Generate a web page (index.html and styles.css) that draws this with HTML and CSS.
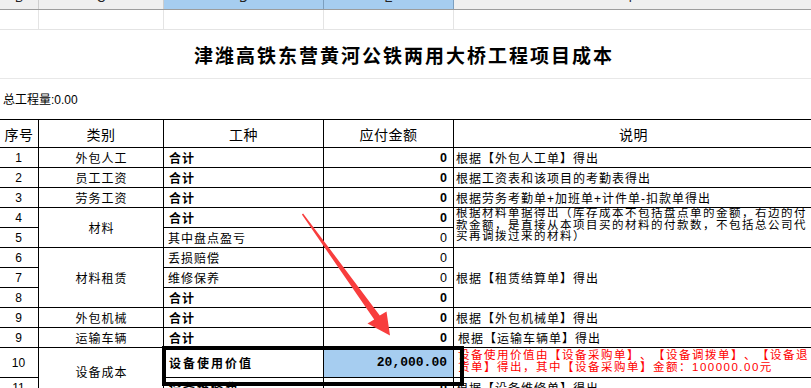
FILE: index.html
```html
<!DOCTYPE html>
<html lang="zh-CN">
<head>
<meta charset="utf-8">
<title>津潍高铁东营黄河公铁两用大桥工程项目成本</title>
<link rel="stylesheet" href="styles.css">
</head>
<body>
<div class="sheet">
  <div class="cols colhead">
    <div class="ch">B</div>
    <div class="ch">C</div>
    <div class="ch on">D</div>
    <div class="ch on">E</div>
    <div class="ch last">F</div>
  </div>
  <div class="cols blank">
    <div class="g"></div><div class="g"></div><div class="g"></div><div class="g"></div><div class="g last"></div>
  </div>
  <h1 class="title">津潍高铁东营黄河公铁两用大桥工程项目成本</h1>
  <div class="qty">总工程量:0.00</div>

  <div class="tbl">
    <div class="c h">序号</div>
    <div class="c h">类别</div>
    <div class="c h">工种</div>
    <div class="c h">应付金额</div>
    <div class="c h f">说明</div>

    <div class="c n">1</div>
    <div class="c k">外包人工</div>
    <div class="c l b">合计</div>
    <div class="c r b">0</div>
    <div class="c f">根据【外包人工单】得出</div>

    <div class="c n">2</div>
    <div class="c k">员工工资</div>
    <div class="c l b">合计</div>
    <div class="c r b">0</div>
    <div class="c f">根据工资表和该项目的考勤表得出</div>

    <div class="c n">3</div>
    <div class="c k">劳务工资</div>
    <div class="c l b">合计</div>
    <div class="c r b">0</div>
    <div class="c f">根据劳务考勤单+加班单+计件单-扣款单得出</div>

    <div class="c n">4</div>
    <div class="c k span2">材料</div>
    <div class="c l b">合计</div>
    <div class="c r b">0</div>
    <div class="c f span2 desc">根据材料单据得出（库存成本不包括盘点单的金额，右边的付<br>款金额，是直接从本项目买的材料的付款数，不包括总公司代<br>买再调拨过来的材料）</div>

    <div class="c n">5</div>
    <div class="c l">其中盘点盈亏</div>
    <div class="c r">0</div>

    <div class="c n">6</div>
    <div class="c k span3">材料租赁</div>
    <div class="c l">丢损赔偿</div>
    <div class="c r">0</div>
    <div class="c f span3">根据【租赁结算单】得出</div>

    <div class="c n">7</div>
    <div class="c l">维修保养</div>
    <div class="c r">0</div>

    <div class="c n">8</div>
    <div class="c l b">合计</div>
    <div class="c r b">0</div>

    <div class="c n">9</div>
    <div class="c k">外包机械</div>
    <div class="c l b">合计</div>
    <div class="c r b">0</div>
    <div class="c f">根据【外包机械单】得出</div>

    <div class="c n">9</div>
    <div class="c k">运输车辆</div>
    <div class="c l b">合计</div>
    <div class="c r b">0</div>
    <div class="c f indent">根据【运输车辆单】得出</div>

    <div class="c n">10</div>
    <div class="c k span2 low">设备成本</div>
    <div class="c l b wide selcell">设备使用价值</div>
    <div class="c r b mono picked">20,000.00</div>
    <div class="c f desc red">设备使用价值由【设备采购单】、【设备调拨单】、【设备退<br>货单】得出，其中【设备采购单】金额：100000.00元</div>

    <div class="c n">11</div>
    <div class="c l b wide">设备维修费</div>
    <div class="c r b">0</div>
    <div class="c f">根据【设备维修单】得出</div>
  </div>

  <svg class="arrow" width="811" height="388" viewBox="0 0 811 388" aria-hidden="true">
    <polygon points="303.1,213.4 379.8,315.5 386.5,311.5 390,335.5 367.5,323.5 374.2,319.5 301.9,214.6" fill="#f83d3d"/>
  </svg>
</div>
</body>
</html>
```

FILE: styles.css
```css
* {
  box-sizing: border-box;
}

html,
body {
  margin: 0;
  padding: 0;
}

body {
  width: 811px;
  height: 388px;
  overflow: hidden;
  background: #ffffff;
  color: #000000;
  font-family: "Liberation Sans", "Noto Sans CJK SC", sans-serif;
  text-spacing-trim: space-all;
}

.sheet {
  position: relative;
  width: 811px;
  height: 388px;
  overflow: hidden;
}

.cols {
  display: grid;
  grid-template-columns: 39px 125px 160px 130px 357px;
}

/* spreadsheet column header strip (mostly scrolled off) */
.colhead {
  margin-top: -11px;
  height: 21px;
  background: #efefef;
  border-bottom: 1px solid #9c9c9c;
}

.colhead .ch {
  border-right: 1px solid #cdcdcd;
  font-size: 12px;
  line-height: 19px;
  text-align: center;
  color: #222222;
}

.colhead .ch.on {
  background: #a6cdf0;
  border-right-color: #7c9fbf;
}

.colhead .ch.last {
  border-right: none;
}

.blank {
  height: 20px;
  border-bottom: 1px solid #e4e4e4;
}

.blank .g {
  border-right: 1px solid #e4e4e4;
}

.blank .g.last {
  border-right: none;
}

.title {
  margin: 0;
  height: 49px;
  border-bottom: 1px solid #e8e8e8;
  display: flex;
  align-items: center;
  justify-content: center;
  padding-right: 3px;
  font-family: "Noto Sans CJK SC", sans-serif;
  font-size: 19px;
  font-weight: 700;
  letter-spacing: 2px;
}

.qty {
  height: 40px;
  display: flex;
  align-items: center;
  padding-left: 3px;
  padding-bottom: 1px;
  font-size: 12px;
}

/* the cost table */
.tbl {
  display: grid;
  grid-template-columns: 39px 125px 160px 130px 357px;
  grid-template-rows: 28px repeat(10, 20px) 30px 20px;
  border-top: 1px solid #000000;
}

.c {
  display: flex;
  align-items: center;
  border-right: 1px solid #000000;
  border-bottom: 1px solid #000000;
  font-size: 12px;
  letter-spacing: 1px;
  white-space: nowrap;
  overflow: hidden;
}

.c.h {
  justify-content: center;
  font-size: 14px;
  letter-spacing: 0.5px;
  padding-top: 1px;
}

.c.n {
  justify-content: center;
  font-size: 12px;
  letter-spacing: 0;
  padding-right: 1px;
}

.c.k {
  justify-content: center;
  padding-left: 1px;
}

.c.k.low {
  padding-bottom: 3px;
}

.c.l {
  padding-left: 4px;
}

.c.l.b {
  padding-left: 5px;
}

.c.r {
  justify-content: flex-end;
  padding-right: 6px;
  font-size: 12.5px;
  letter-spacing: 0;
}

.c.b {
  font-weight: 700;
}

.c.f {
  border-right: none;
  padding-left: 2px;
}

.c.f.indent {
  padding-left: 4px;
}

.span2 {
  grid-row: span 2;
}

.span3 {
  grid-row: span 3;
}

.c.desc {
  line-height: 11.5px;
  font-size: 11.5px;
  letter-spacing: 1.5px;
  padding-bottom: 4px;
}

.c.red {
  color: #ff0000;
  line-height: 12.3px;
  padding-left: 4px;
  padding-bottom: 3px;
  letter-spacing: 1.5px;
}

.c.wide {
  letter-spacing: 2px;
}

.c.mono {
  font-family: "Liberation Mono", monospace;
  font-size: 13px;
}

.c.picked {
  background: #a6cdf0;
}

/* active-cell selection frame around the highlighted row */
.c.selcell {
  position: relative;
  overflow: visible;
}

.c.selcell::after {
  content: "";
  position: absolute;
  left: -2px;
  top: -2px;
  width: 294px;
  height: 32px;
  border: 4px solid #000000;
  z-index: 2;
}

.arrow {
  position: absolute;
  left: 0;
  top: 0;
  pointer-events: none;
  z-index: 3;
}
```
